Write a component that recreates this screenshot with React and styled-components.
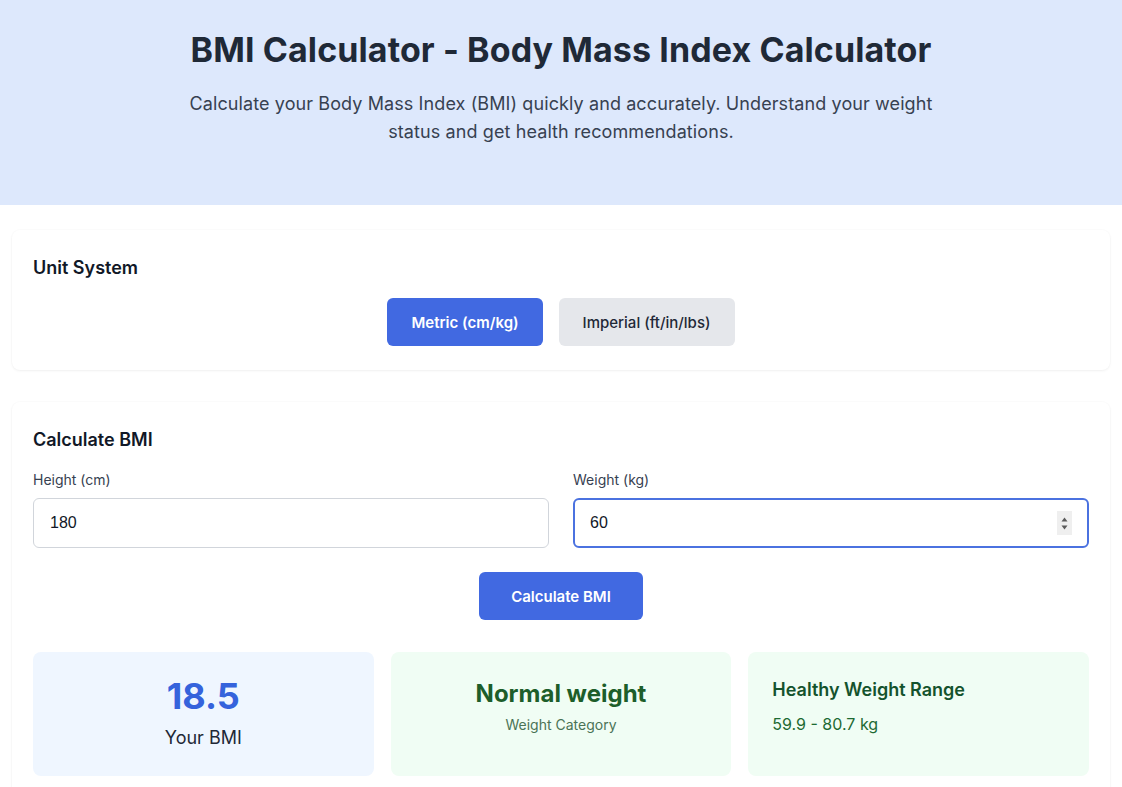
import React, { useState } from "react";
import styled, { createGlobalStyle } from "styled-components";

const GlobalStyle = createGlobalStyle`
  * { box-sizing: border-box; }
  body {
    margin: 0;
    background: #ffffff;
    font-family: Inter, "Noto Sans", sans-serif;
    color: #1f2937;
  }
`;

const Hero = styled.header`
  background: #dde8fc;
  height: 205px;
  padding-top: 30px;
  text-align: center;
`;

const Title = styled.h1`
  margin: 0;
  font-size: 34px;
  line-height: 40px;
  font-weight: 700;
  color: #1f2937;
  letter-spacing: 0.1px;
`;

const Lead = styled.p`
  margin: 20px auto 0;
  max-width: 780px;
  font-size: 18px;
  line-height: 28px;
  color: #374151;
  letter-spacing: 0.1px;
`;

const Main = styled.main`
  padding: 25px 12px 0;
  display: flex;
  flex-direction: column;
  gap: 32px;
`;

const Card = styled.section`
  background: #fff;
  border-radius: 8px;
  box-shadow: 0 1px 3px rgba(0, 0, 0, 0.05), 0 0 0 1px rgba(0, 0, 0, 0.012);
  padding: 24px 21px;
`;

const CardTitle = styled.h2`
  margin: 0;
  font-size: 18px;
  line-height: 28px;
  font-weight: 600;
  color: #111827;
`;

const ToggleRow = styled.div`
  display: flex;
  justify-content: center;
  gap: 16px;
  margin-top: 16px;
`;

const ToggleButton = styled.button`
  height: 48px;
  padding: 0 24px;
  border: none;
  border-radius: 6px;
  font-family: inherit;
  font-size: 15px;
  font-weight: ${(p) => (p.$active ? 600 : 500)};
  background: ${(p) => (p.$active ? "#4169e1" : "#e5e7eb")};
  color: ${(p) => (p.$active ? "#ffffff" : "#1f2937")};
  cursor: pointer;
`;

const FieldGrid = styled.div`
  display: grid;
  grid-template-columns: 1fr 1fr;
  gap: 24px;
  margin-top: 16px;
`;

const Field = styled.label`
  display: flex;
  flex-direction: column;
  gap: 8px;
`;

const LabelText = styled.span`
  font-size: 14px;
  line-height: 20px;
  color: #374151;
`;

const InputWrap = styled.div`
  position: relative;
`;

const Input = styled.input`
  width: 100%;
  height: 50px;
  font-family: "Liberation Sans", Arial, sans-serif;
  font-size: 16px;
  color: #111827;
  border-radius: 6px;
  border: ${(p) => (p.$focused ? "2px solid #4b72e0" : "1px solid #d1d5db")};
  padding: 0 ${(p) => (p.$focused ? "15px" : "16px")};
  outline: none;
  background: #fff;
`;

const Spinner = styled.span`
  position: absolute;
  right: 17px;
  top: 13px;
  width: 15px;
  height: 24px;
  background: #efefef;
  display: flex;
  flex-direction: column;
  align-items: center;
  justify-content: center;
  gap: 3px;
  pointer-events: none;
`;

const Actions = styled.div`
  display: flex;
  justify-content: center;
  margin-top: 24px;
`;

const PrimaryButton = styled.button`
  height: 48px;
  padding: 0 32px;
  border: none;
  border-radius: 6px;
  background: #4169e1;
  color: #fff;
  font-family: inherit;
  font-size: 15px;
  font-weight: 600;
  cursor: pointer;
`;

const Results = styled.div`
  display: grid;
  grid-template-columns: repeat(3, 1fr);
  gap: 17px;
  margin-top: 32px;
`;

const ResultCard = styled.div`
  height: 124px;
  border-radius: 8px;
  padding: 24px;
  background: ${(p) => (p.$tone === "blue" ? "#eff6ff" : "#f0fdf4")};
  text-align: ${(p) => (p.$align || "center")};
  display: flex;
  flex-direction: column;
  justify-content: ${(p) => (p.$align === "left" ? "flex-start" : "center")};
`;

const BigValue = styled.div`
  font-size: 36px;
  line-height: 40px;
  font-weight: 700;
  color: #3563dc;
`;

const BigCaption = styled.div`
  margin-top: 8px;
  font-size: 18px;
  line-height: 28px;
  color: #1f2937;
`;

const Category = styled.div`
  font-size: 24px;
  line-height: 32px;
  font-weight: 700;
  color: #1d5e2a;
  margin-top: -16px;
`;

const CategoryCaption = styled.div`
  margin-top: 5px;
  font-size: 14px;
  line-height: 20px;
  color: #4a7356;
`;

const RangeTitle = styled.div`
  font-size: 18px;
  line-height: 28px;
  font-weight: 600;
  color: #14532d;
`;

const RangeValue = styled.div`
  margin-top: 8px;
  font-size: 16px;
  line-height: 24px;
  color: #1d6a33;
`;

function Arrow({ up }) {
  return (
    <svg width="7" height="5" viewBox="0 0 7 5">
      <path d={up ? "M3.5 0.5 L6.5 4.5 L0.5 4.5 Z" : "M0.5 0.5 L6.5 0.5 L3.5 4.5 Z"} fill="#5b5b5b" />
    </svg>
  );
}

export default function App() {
  const [unit, setUnit] = useState("metric");
  const [height, setHeight] = useState("180");
  const [weight, setWeight] = useState("60");

  return (
    <>
      <GlobalStyle />
      <Hero>
        <Title>BMI Calculator - Body Mass Index Calculator</Title>
        <Lead>
          Calculate your Body Mass Index (BMI) quickly and accurately. Understand your weight
          status and get health recommendations.
        </Lead>
      </Hero>
      <Main>
        <Card>
          <CardTitle>Unit System</CardTitle>
          <ToggleRow>
            <ToggleButton $active={unit === "metric"} onClick={() => setUnit("metric")}>
              Metric (cm/kg)
            </ToggleButton>
            <ToggleButton $active={unit === "imperial"} onClick={() => setUnit("imperial")}>
              Imperial (ft/in/lbs)
            </ToggleButton>
          </ToggleRow>
        </Card>

        <Card>
          <CardTitle>Calculate BMI</CardTitle>
          <FieldGrid>
            <Field>
              <LabelText>Height (cm)</LabelText>
              <InputWrap>
                <Input value={height} onChange={(e) => setHeight(e.target.value)} />
              </InputWrap>
            </Field>
            <Field>
              <LabelText>Weight (kg)</LabelText>
              <InputWrap>
                <Input $focused value={weight} onChange={(e) => setWeight(e.target.value)} />
                <Spinner>
                  <Arrow up />
                  <Arrow />
                </Spinner>
              </InputWrap>
            </Field>
          </FieldGrid>
          <Actions>
            <PrimaryButton>Calculate BMI</PrimaryButton>
          </Actions>
          <Results>
            <ResultCard $tone="blue">
              <BigValue>18.5</BigValue>
              <BigCaption>Your BMI</BigCaption>
            </ResultCard>
            <ResultCard $tone="green">
              <Category>Normal weight</Category>
              <CategoryCaption>Weight Category</CategoryCaption>
            </ResultCard>
            <ResultCard $tone="green" $align="left">
              <RangeTitle>Healthy Weight Range</RangeTitle>
              <RangeValue>59.9 - 80.7 kg</RangeValue>
            </ResultCard>
          </Results>
        </Card>
      </Main>
    </>
  );
}
